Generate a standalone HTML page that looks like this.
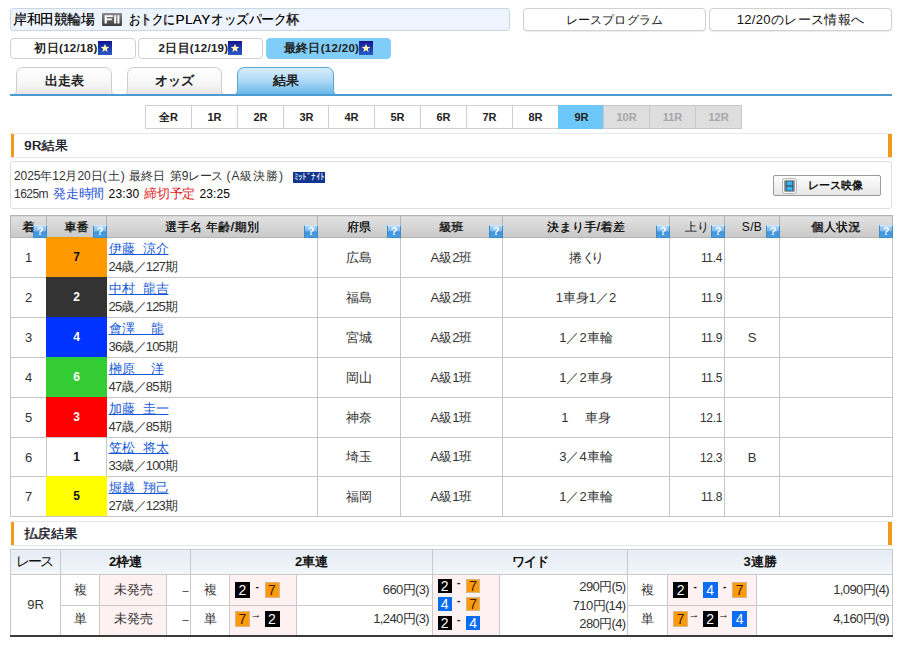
<!DOCTYPE html>
<html lang="ja"><head><meta charset="utf-8">
<style>
*{box-sizing:border-box;margin:0;padding:0}
html,body{width:900px;height:647px;overflow:hidden;background:#fff}
body{font-family:"Liberation Sans",sans-serif;color:#222;position:relative;font-size:12px}
.abs{position:absolute}
#title{left:10px;top:8px;width:500px;height:23px;background:#eef4fd;border:1px solid #c9d6e6;border-radius:3px;font-size:13.5px;line-height:21px;padding-left:2px;color:#000;text-shadow:.3px 0 0 rgba(0,0,0,.6);white-space:nowrap}
.btn{top:8px;height:23px;border:1px solid #d0d0d0;border-radius:4px;background:#fff;text-align:center;font-size:13px;line-height:21px;color:#111;box-shadow:0 1px 1px rgba(0,0,0,.08)}
.day{top:37.5px;height:21px;border:1px solid #d0d0d0;border-radius:4px;background:#fff;text-align:center;font-size:11.5px;font-weight:bold;line-height:19px;color:#222;white-space:nowrap;letter-spacing:.3px}
.day.on{background:#7fcdf8;border-color:#7fcdf8}
.star{display:inline-block;width:14px;height:14px;vertical-align:-3px;margin-left:0}
.tab{top:67px;height:28px;text-align:center;font-size:13px;font-weight:bold;line-height:28px;color:#222}
.tab span{position:relative}
#f2{display:inline-block;vertical-align:-2px;margin:0 7px 0 8px}
#t1{letter-spacing:-.42px}#t2a{display:inline-block;transform:scaleX(.821);transform-origin:0 50%;margin-right:-10px}#t2b{letter-spacing:.4px}#t2c{display:inline-block;transform:scaleX(.898);transform-origin:0 50%;margin-right:-10px}
#b1{font-size:12px;letter-spacing:.1px}#b2{font-size:13px;letter-spacing:.33px}
#tabline{left:10px;top:94px;width:882px;height:2px;background:#4d9bd0}

.rt{top:104.5px;height:24px;width:47px;border:1px solid #cfcfcf;background:#fff;text-align:center;font-size:11px;font-weight:bold;line-height:22px;color:#222}
.rt.on{background:#6dc8f9;border-color:#6dc8f9}
.rt.off{background:#dedede;color:#a6a6a6;border-color:#c8c8c8}
.sec{left:10px;width:882px;height:25px;border-top:1px solid #e8e8e8;border-bottom:1px solid #e8e8e8;font-size:13px;letter-spacing:.4px;font-weight:normal;text-shadow:.5px 0 0 #1c1c2c;line-height:23px;padding-left:14px;color:#1c1c2c}
.sec:before,.sec:after{content:"";position:absolute;top:0;bottom:0;background:#f39a1c}
.sec:before{left:.5px;width:3.5px}.sec:after{right:0;width:4px}
#info{left:10px;top:161px;width:882px;height:48px;border:1px solid #dedede;border-radius:3px;font-size:12px;color:#333;line-height:16px;white-space:nowrap}
#j2,#j4{font-size:13px}
#i1{letter-spacing:-0.08px} #i2{letter-spacing:1.17px} #i3{letter-spacing:0.0px} #i4{letter-spacing:-0.34px} #i5{letter-spacing:0.92px} #j1{letter-spacing:-0.54px} #j2{letter-spacing:-0.25px} #j3{letter-spacing:0.15px} #j4{letter-spacing:-0.25px} #j5{letter-spacing:0.11px}
#mid{left:282px;top:10px;width:32px;height:11px;background:#12358f;color:#fff;font-size:9px;line-height:11px;text-align:center;letter-spacing:-.9px;overflow:hidden}
#movie{left:773px;top:175px;width:108px;height:21px;border:1px solid #9a9a9a;border-radius:2px;background:linear-gradient(#fefefe,#e6e6e6);font-size:11px;font-weight:bold;line-height:19px;color:#111;padding-left:34px;white-space:nowrap}
#mic{left:8px;top:1.5px;width:15px;height:16px}
table{border-collapse:collapse;table-layout:fixed}
#res{left:10px;top:215px;width:883px}
#res th{height:22px;background:linear-gradient(#e2e2e2,#c8c8c8);border:1px solid #b4b4b4;font-size:12px;font-weight:normal;text-shadow:.4px 0 0 #222;letter-spacing:.35px;color:#111;position:relative;text-align:center;padding:1px 0 0 0}
#res th.l{text-shadow:none}
#res td{height:40px;border:1px solid #c6c6c6;font-size:13px;color:#333;text-align:center;padding:0;background:#fff}
#res tr.h39 td{height:39px}
#res td.nm{text-align:left;padding-left:1.5px;line-height:18px}
#res td.nm a{color:#1558d6;text-decoration:underline;word-spacing:4.4px}
#res td.nm span{letter-spacing:-.8px}
#res td.r span{letter-spacing:-.35px;font-size:12px}
.k{letter-spacing:-4px;margin-right:4px}
#res td.r{text-align:right;padding-right:2px}
#res td.n{font-weight:bold;font-size:12px;position:relative}
.cb{position:absolute;top:-1px;left:-1px;right:-1px;bottom:0;line-height:41px;text-align:center;z-index:1}
.q{text-shadow:none;letter-spacing:0;position:absolute;right:-1px;bottom:-1px;width:14px;height:13.5px;background:linear-gradient(#d4e9fb 0,#96ccf4 10%,#7fbdef 46%,#3f92dc 52%,#4b9de2 100%);border:1px solid #3f8dc6;border-top-color:#cfe6f8;color:#fff;font-size:11px;line-height:11.5px;font-weight:bold;z-index:2}

#pay{left:10px;top:549px;width:883px;border-bottom:2px solid #3a3a3a}
#pay th{height:25px;background:linear-gradient(#e6edf5,#f3f6fa);border:1px solid #c9c9c9;font-size:13px;font-weight:bold;color:#111;text-align:center;padding:0}
#pay th.rl{font-weight:normal;font-size:14px;letter-spacing:-1.7px;padding:0 3px 0 0}
#pay td{height:31px;border:1px solid #c9c9c9;font-size:13px;color:#333;text-align:center;padding:0;background:#fff;white-space:nowrap}
#pay tr.r2 td{height:30px;padding-bottom:2px}
#pay td.p{background:#fef1f1}
#pay td.c{background:#fef1f1;text-align:left;padding-left:5px;line-height:16px;font-size:0;padding-bottom:1px}
#pay td.a{text-align:right;padding-right:3px;font-size:13px;letter-spacing:-.62px}
#pay td.d{font-size:11px;padding-right:2px}
.b{display:inline-block;width:15px;height:16px;line-height:16px;text-align:center;font-size:14px;vertical-align:top}
.b2{background:#000;color:#fff}.b7{background:#ff9a0a;color:#3a1c00;box-shadow:inset 0 0 0 1px rgba(200,190,170,.8)}.b4{background:#0a6cf0;color:#fff}
.s{display:inline-block;width:14.5px;height:16px;line-height:9px;text-align:center;font-size:10px;vertical-align:top;color:#111}
.w .b{width:14px;height:14px;line-height:14px;font-size:14px}
.w div{height:18.5px;line-height:18.5px;position:relative;top:1px}
.c.w div{height:18.5px;line-height:14px;padding-top:2px;top:0;left:-.5px}
.w .s{height:14px;line-height:8px}
.s.ar{font-size:11px;font-weight:bold;line-height:7px;color:#000;padding-right:2.5px}
.s{font-weight:bold}
</style></head><body>
<svg width="0" height="0" style="position:absolute"><defs><linearGradient id="sg" x1="0" y1="0" x2="0" y2="1"><stop offset="0" stop-color="#14148f"/><stop offset="1" stop-color="#2a5cc8"/></linearGradient></defs></svg>
<div id="title" class="abs"><span id="t1">岸和田競輪場</span><svg id="f2" viewBox="0 0 20 13" width="20" height="13"><defs><linearGradient id="g2" x1="0" y1="0" x2="0" y2="1"><stop offset="0" stop-color="#8c8c8c"/><stop offset=".5" stop-color="#666"/><stop offset="1" stop-color="#3c3c3c"/></linearGradient></defs><rect width="20" height="13" rx="1" fill="url(#g2)"/><path d="M2.6 2.3h8.2v1.8H4.8v1.5h5v1.7h-5v3.2H2.6z M12.2 2.3h2v8.2h-2z M15.4 2.3h2v8.2h-2z" fill="#fff"/></svg><span id="t2"><span id="t2a">おトクに</span><span id="t2b">PLAY</span><span id="t2c">オッズパーク杯</span></span></div>
<div class="abs btn" style="left:523px;width:183px"><span id="b1">レースプログラム</span></div>
<div class="abs btn" style="left:709px;width:183px"><span id="b2">12/20のレース情報へ</span></div>
<div class="abs day" style="left:10px;width:126px">初日(12/18)<svg class="star" viewBox="0 0 14 14"><rect width="14" height="14" fill="url(#sg)"/><path d="M7 2.8 8.1 5.8 11.3 5.9 8.8 7.9 9.7 11 7 9.2 4.3 11 5.2 7.9 2.7 5.9 5.9 5.8Z" fill="#fffab8"/></svg></div>
<div class="abs day" style="left:138px;width:125px">2日目(12/19)<svg class="star" viewBox="0 0 14 14"><rect width="14" height="14" fill="url(#sg)"/><path d="M7 2.8 8.1 5.8 11.3 5.9 8.8 7.9 9.7 11 7 9.2 4.3 11 5.2 7.9 2.7 5.9 5.9 5.8Z" fill="#fffab8"/></svg></div>
<div class="abs day on" style="left:266px;width:125px">最終日(12/20)<svg class="star" viewBox="0 0 14 14"><rect width="14" height="14" fill="url(#sg)"/><path d="M7 2.8 8.1 5.8 11.3 5.9 8.8 7.9 9.7 11 7 9.2 4.3 11 5.2 7.9 2.7 5.9 5.9 5.8Z" fill="#fffab8"/></svg></div>
<div class="abs tab" style="left:16px;width:96px"><svg class="abs" style="left:-4px;top:0" width="104" height="28" viewBox="0 0 104 28"><defs><linearGradient id="tg1" x1="0" y1="0" x2="0" y2="1"><stop offset="0" stop-color="#ffffff"/><stop offset=".6" stop-color="#f6f6f6"/><stop offset="1" stop-color="#e6e6e6"/></linearGradient></defs><path d="M0 28 C3 28 4.5 26 4.5 22 L4.5 8 Q4.5 .5 12 .5 L92 .5 Q99.5 .5 99.5 8 L99.5 22 C99.5 26 101 28 104 28 Z" fill="url(#tg1)"/><path d="M0 28 C3 28 4.5 26 4.5 22 L4.5 8 Q4.5 .5 12 .5 L92 .5 Q99.5 .5 99.5 8 L99.5 22 C99.5 26 101 28 104 28" fill="none" stroke="#cdcdcd"/></svg><span>出走表</span></div>
<div class="abs tab" style="left:127px;width:95px"><svg class="abs" style="left:-4px;top:0" width="103" height="28" viewBox="0 0 103 28"><defs><linearGradient id="tg2" x1="0" y1="0" x2="0" y2="1"><stop offset="0" stop-color="#ffffff"/><stop offset=".6" stop-color="#f6f6f6"/><stop offset="1" stop-color="#e6e6e6"/></linearGradient></defs><path d="M0 28 C3 28 4.5 26 4.5 22 L4.5 8 Q4.5 .5 12 .5 L91 .5 Q98.5 .5 98.5 8 L98.5 22 C98.5 26 100 28 103 28 Z" fill="url(#tg2)"/><path d="M0 28 C3 28 4.5 26 4.5 22 L4.5 8 Q4.5 .5 12 .5 L91 .5 Q98.5 .5 98.5 8 L98.5 22 C98.5 26 100 28 103 28" fill="none" stroke="#cdcdcd"/></svg><span>オッズ</span></div>
<div class="abs tab" style="left:237px;width:97px"><svg class="abs" style="left:-4px;top:0" width="105" height="28" viewBox="0 0 105 28"><defs><linearGradient id="tg3" x1="0" y1="0" x2="0" y2="1"><stop offset="0" stop-color="#d9eefb"/><stop offset=".5" stop-color="#acd9f5"/><stop offset="1" stop-color="#62b6e8"/></linearGradient></defs><path d="M0 28 C3 28 4.5 26 4.5 22 L4.5 8 Q4.5 .5 12 .5 L93 .5 Q100.5 .5 100.5 8 L100.5 22 C100.5 26 102 28 105 28 Z" fill="url(#tg3)"/><path d="M0 28 C3 28 4.5 26 4.5 22 L4.5 8 Q4.5 .5 12 .5 L93 .5 Q100.5 .5 100.5 8 L100.5 22 C100.5 26 102 28 105 28" fill="none" stroke="#5aa6d4"/></svg><span>結果</span></div>
<div id="tabline" class="abs"></div>

<div class="rt abs" style="left:145px">全R</div><div class="rt abs" style="left:191px">1R</div><div class="rt abs" style="left:237px">2R</div><div class="rt abs" style="left:283px">3R</div><div class="rt abs" style="left:328px">4R</div><div class="rt abs" style="left:374px">5R</div><div class="rt abs" style="left:420px">6R</div><div class="rt abs" style="left:466px">7R</div><div class="rt abs" style="left:512px">8R</div><div class="rt abs on" style="left:558px">9R</div><div class="rt abs off" style="left:603px">10R</div><div class="rt abs off" style="left:649px">11R</div><div class="rt abs off" style="left:695px">12R</div>
<div class="abs sec" style="top:132.5px">9R結果</div>
<div id="info" class="abs"><span id="i1" class="abs" style="left:3px;top:6px">2025年12月20日</span><span id="i2" class="abs" style="left:91.5px;top:6px">(土)</span><span id="i3" class="abs" style="left:118px;top:6px">最終日</span><span id="i4" class="abs" style="left:159px;top:6px">第9レース</span><span id="i5" class="abs" style="left:215.5px;top:6px">(A級決勝)</span><span id="mid" class="abs">ﾐｯﾄﾞﾅｲﾄ</span><span id="j1" class="abs" style="left:3px;top:24px">1625m</span><span id="j2" class="abs" style="left:42px;top:24px;color:#2a55d8">発走時間</span><span id="j3" class="abs" style="left:97.6px;top:24px;color:#000">23:30</span><span id="j4" class="abs" style="left:133px;top:24px;color:#e01818">締切予定</span><span id="j5" class="abs" style="left:188.4px;top:24px;color:#000">23:25</span></div>
<div id="movie" class="abs"><svg id="mic" class="abs" viewBox="0 0 15 16"><rect x=".5" y=".5" width="14" height="15" rx="2" fill="#f4f4f4" stroke="#b8b8b8"/><rect x="2.5" y="2.5" width="10" height="11" fill="#3a4650"/><rect x="4.6" y="3.4" width="5.8" height="4" fill="#35b6f2"/><rect x="4.6" y="8.6" width="5.8" height="4" fill="#35b6f2"/><path d="M3 4h1M3 6h1M3 8h1M3 10h1M3 12h1M11 4h1M11 6h1M11 8h1M11 10h1M11 12h1" stroke="#cfd8e0" stroke-width=".8"/></svg>レース映像</div>
<table id="res" class="abs"><colgroup><col style="width:36px"><col style="width:60px"><col style="width:211px"><col style="width:83px"><col style="width:102px"><col style="width:167px"><col style="width:55px"><col style="width:55px"><col style="width:113px"></colgroup>
<tr><th>着<span class="q">?</span></th><th>車番<span class="q">?</span></th><th>選手名 年齢/期別<span class="q">?</span></th><th>府県<span class="q">?</span></th><th>級班<span class="q">?</span></th><th>決まり手/着差<span class="q">?</span></th><th class="l">上り<span class="q">?</span></th><th class="l">S/B<span class="q">?</span></th><th>個人状況<span class="q">?</span></th></tr>
<tr><td>1</td><td class="n"><div class="cb" style="background:#ff9900;color:#111">7</div></td><td class="nm"><a>伊藤 涼介</a><br><span>24歳／127期</span></td><td>広島</td><td>A級2班</td><td>捲<span class="k">くり</span></td><td class="r"><span>11.4</span></td><td></td><td></td></tr>
<tr><td>2</td><td class="n"><div class="cb" style="background:#333;color:#fff">2</div></td><td class="nm"><a>中村 龍吉</a><br><span>25歳／125期</span></td><td>福島</td><td>A級2班</td><td>1車身1／2</td><td class="r"><span>11.9</span></td><td></td><td></td></tr>
<tr><td>3</td><td class="n"><div class="cb" style="background:#0033ff;color:#fff">4</div></td><td class="nm"><a>會澤&nbsp;&nbsp;龍</a><br><span>36歳／105期</span></td><td>宮城</td><td>A級2班</td><td>1／2車輪</td><td class="r"><span>11.9</span></td><td>S</td><td></td></tr>
<tr><td>4</td><td class="n"><div class="cb" style="background:#33cc33;color:#fff">6</div></td><td class="nm"><a>榊原&nbsp;&nbsp;洋</a><br><span>47歳／85期</span></td><td>岡山</td><td>A級1班</td><td>1／2車身</td><td class="r"><span>11.5</span></td><td></td><td></td></tr>
<tr><td>5</td><td class="n"><div class="cb" style="background:#ff0000;color:#fff">3</div></td><td class="nm"><a>加藤 圭一</a><br><span>47歳／85期</span></td><td>神奈</td><td>A級1班</td><td>1<span style="margin-left:3.5px">　</span>車身</td><td class="r"><span>12.1</span></td><td></td><td></td></tr>
<tr class="h39"><td>6</td><td class="n" style="background:#fff;color:#111">1</td><td class="nm"><a>笠松 将太</a><br><span>33歳／100期</span></td><td>埼玉</td><td>A級1班</td><td>3／4車輪</td><td class="r"><span>12.3</span></td><td>B</td><td></td></tr>
<tr><td>7</td><td class="n"><div class="cb" style="background:#ffff00;color:#111">5</div></td><td class="nm"><a>堀越 翔己</a><br><span>27歳／123期</span></td><td>福岡</td><td>A級1班</td><td>1／2車輪</td><td class="r"><span>11.8</span></td><td></td><td></td></tr>
</table>
<div class="abs sec" style="top:521px">払戻結果</div>

<table id="pay" class="abs"><colgroup><col style="width:50px"><col style="width:39px"><col style="width:67px"><col style="width:24px"><col style="width:39px"><col style="width:67px"><col style="width:136px"><col style="width:67px"><col style="width:128px"><col style="width:40px"><col style="width:89px"><col style="width:136px"></colgroup>
<tr><th class="rl">レース</th><th colspan="3">2枠連</th><th colspan="3">2車連</th><th colspan="2" style="letter-spacing:-1px">ワイド</th><th colspan="3">3連勝</th></tr>
<tr><td rowspan="2">9R</td><td>複</td><td class="p">未発売</td><td class="a d">–</td><td>複</td><td class="c"><span class="b b2">2</span><span class="s">-</span><span class="b b7">7</span></td><td class="a">660円(3)</td>
<td rowspan="2" class="c w"><div><span class="b b2">2</span><span class="s">-</span><span class="b b7">7</span></div><div><span class="b b4">4</span><span class="s">-</span><span class="b b7">7</span></div><div><span class="b b2">2</span><span class="s">-</span><span class="b b4">4</span></div></td>
<td rowspan="2" class="a w" style="padding-right:1.5px"><div>290円(5)</div><div>710円(14)</div><div>280円(4)</div></td>
<td>複</td><td class="c"><span class="b b2">2</span><span class="s">-</span><span class="b b4">4</span><span class="s">-</span><span class="b b7">7</span></td><td class="a">1,090円(4)</td></tr>
<tr class="r2"><td>単</td><td class="p">未発売</td><td class="a d">–</td><td>単</td><td class="c"><span class="b b7">7</span><span class="s ar">→</span><span class="b b2">2</span></td><td class="a">1,240円(3)</td>
<td>単</td><td class="c"><span class="b b7">7</span><span class="s ar">→</span><span class="b b2">2</span><span class="s ar">→</span><span class="b b4">4</span></td><td class="a">4,160円(9)</td></tr>
</table>
</body></html>
